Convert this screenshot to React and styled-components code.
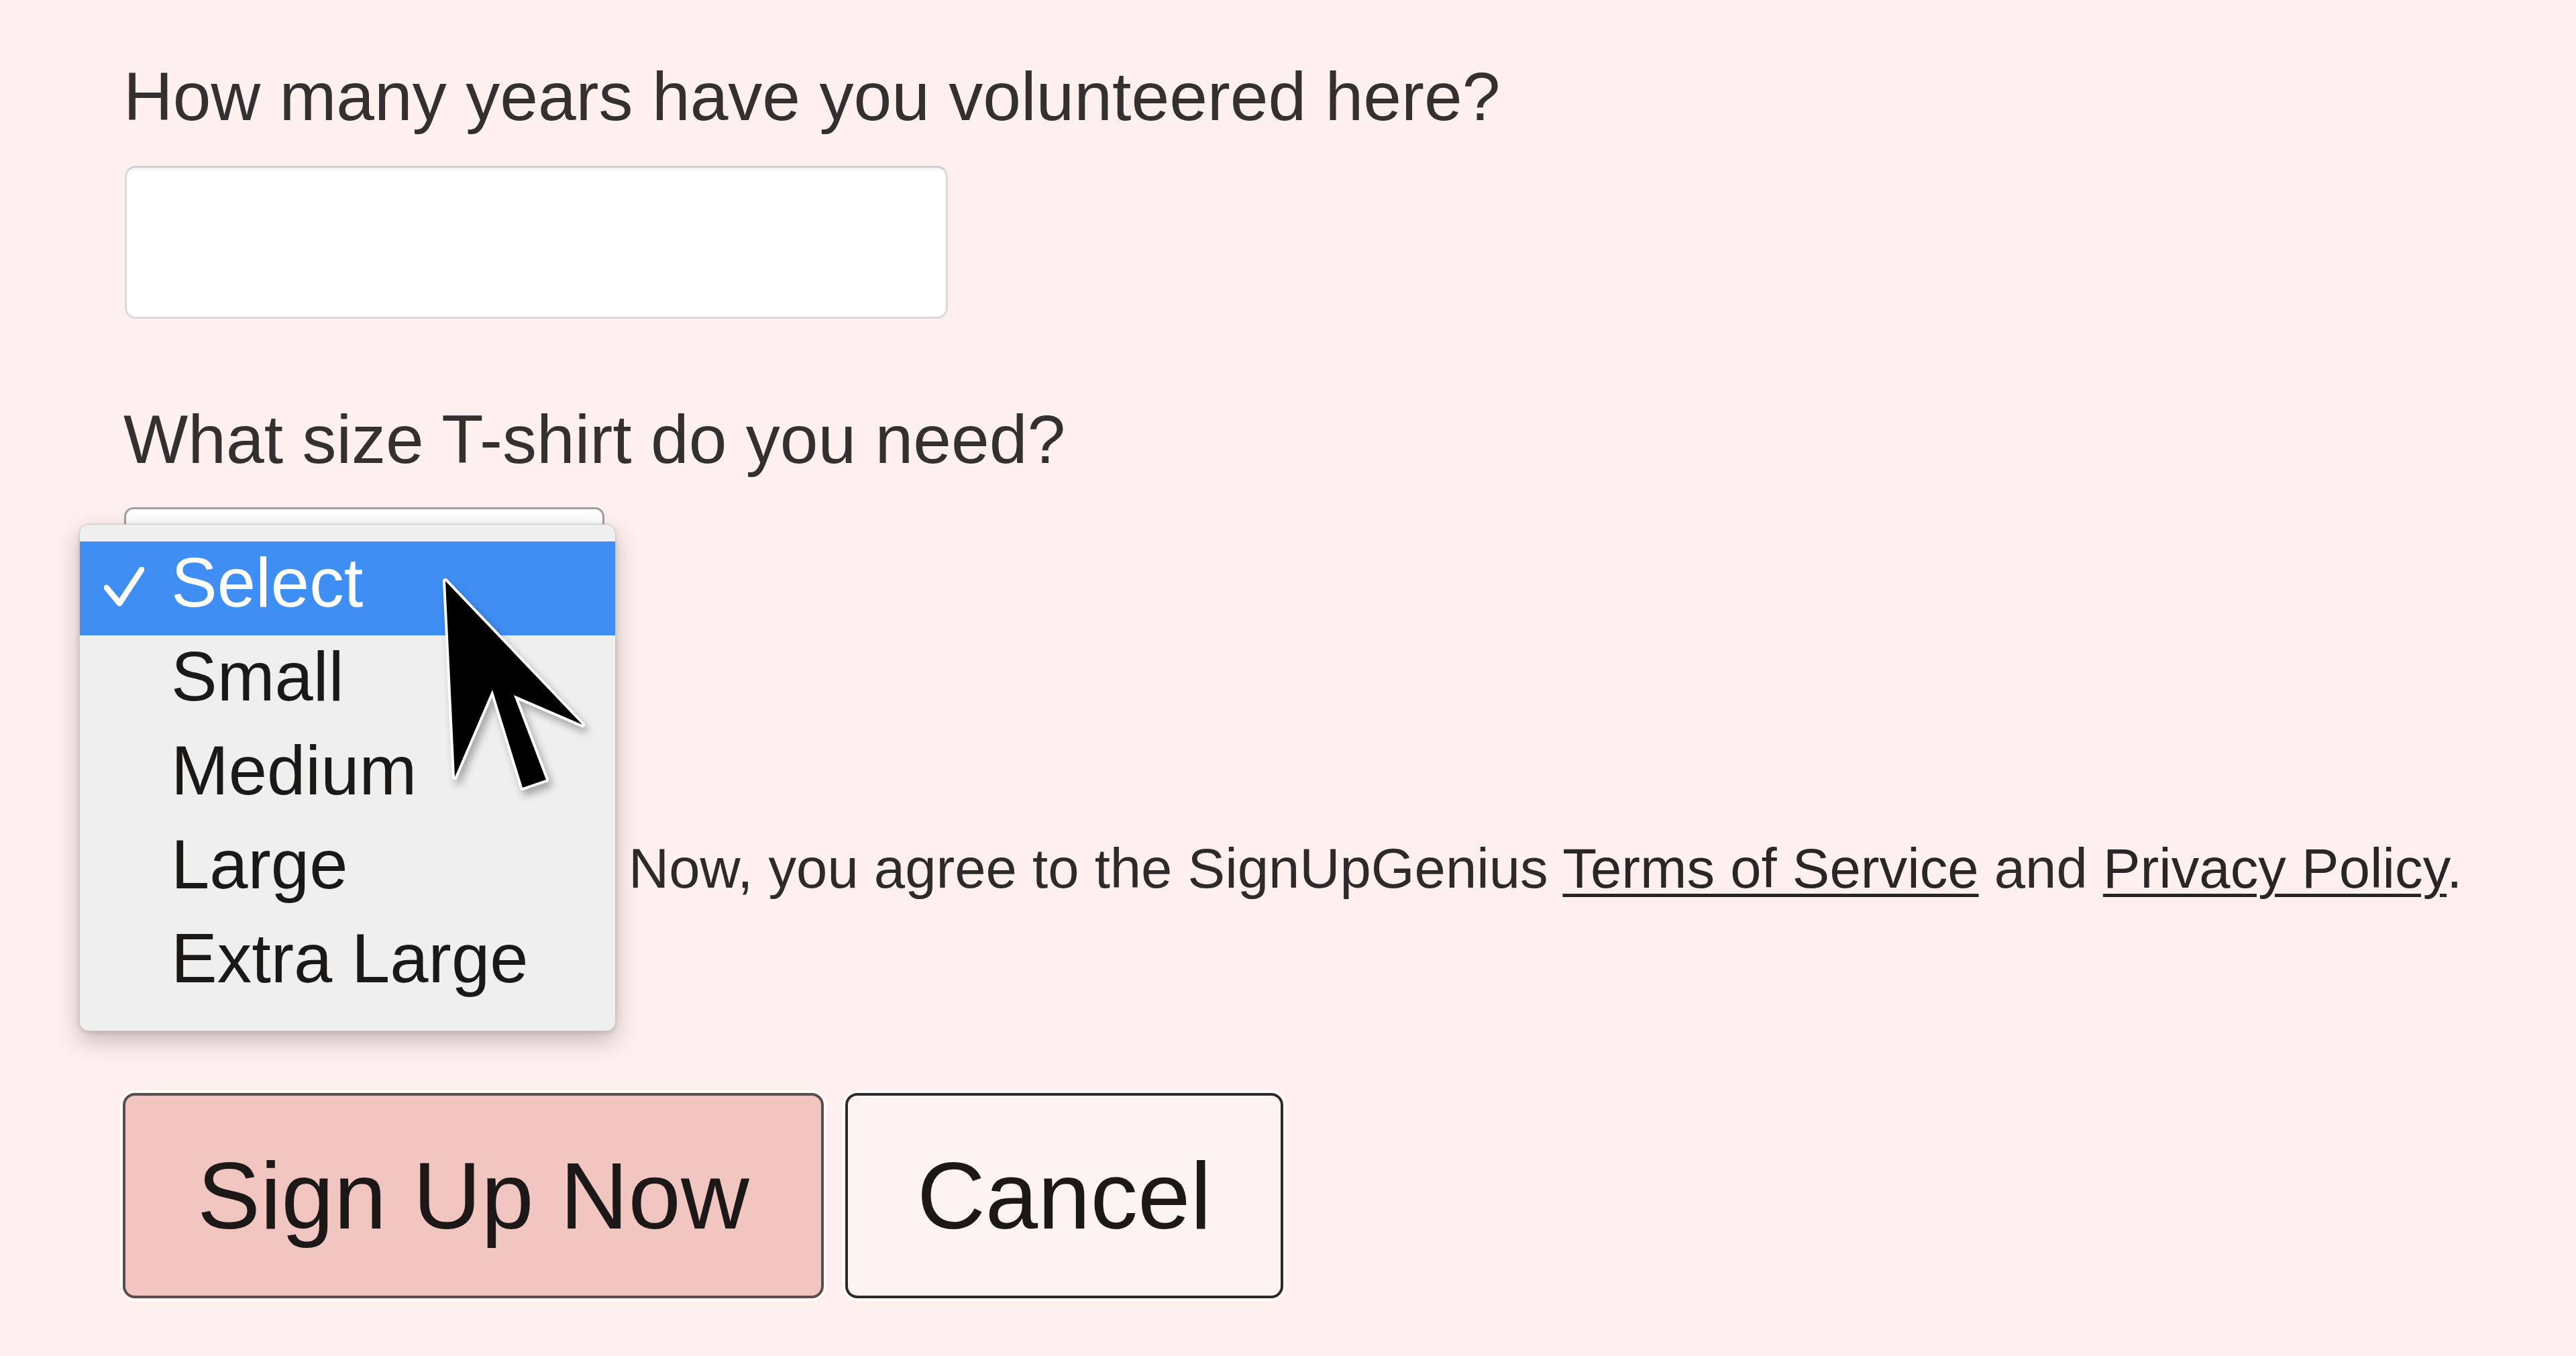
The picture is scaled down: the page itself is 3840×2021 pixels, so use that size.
import React from "react";
import styled, { createGlobalStyle } from "styled-components";

const pageBg = "#fdf0ef";
const ink = "#353030";
const helv = `"Liberation Sans", Arial, sans-serif`;

const sizes = ["Select", "Small", "Medium", "Large", "Extra Large"];

export default function App() {
  return (
    <>
      <GlobalStyle />
      <Form>
        <Label>How many years have you volunteered here?</Label>
        <TextInput type="text" />

        <Label $top={119}>What size T-shirt do you need?</Label>
        <SelectWrap>
          <SelectBox />
          <Menu>
            {sizes.map((s, i) => (
              <Option key={s} $active={i === 0}>
                {i === 0 && (
                  <Check viewBox="0 0 62 62">
                    <polyline points="4,32 24,56 58,4" />
                  </Check>
                )}
                {s}
              </Option>
            ))}
            <Cursor viewBox="-20 -20 240 350">
              <path d="M0,0 L14,292 L70,162 L115,308 L150,296 L102,170 L204,214 Z" />
            </Cursor>
          </Menu>
        </SelectWrap>

        <Terms>
          By clicking Sign Up Now, you agree to the SignUpGenius{" "}
          <Link href="#">Terms of Service</Link> and{" "}
          <Link href="#">Privacy Policy</Link>.
        </Terms>

        <ButtonRow>
          <Button $primary>Sign Up Now</Button>
          <Button>Cancel</Button>
        </ButtonRow>
      </Form>
    </>
  );
}

const GlobalStyle = createGlobalStyle`
  html, body {
    margin: 0;
    padding: 0;
    background: ${pageBg};
    min-height: 100vh;
    overflow: hidden;
  }
  body {
    font-family: ${helv};
    color: ${ink};
  }
`;

const Form = styled.form`
  display: flex;
  flex-direction: column;
  align-items: flex-start;
  padding: 83px 0 0 184px;
`;

const Label = styled.label`
  display: block;
  margin-top: ${(p) => p.$top || 0}px;
  font-size: 102px;
  line-height: 122px;
  color: ${ink};
`;

const TextInput = styled.input`
  box-sizing: border-box;
  margin-top: 42px;
  margin-left: 2px;
  width: 1227px;
  height: 228px;
  background: #fff;
  border: 3px solid #dadada;
  border-top-color: #cfcfcf;
  border-radius: 16px;
  box-shadow: inset 0 3px 4px rgba(0, 0, 0, 0.05);
  outline: none;
`;

const SelectWrap = styled.div`
  position: relative;
  margin-top: 40px;
  margin-left: 1px;
  width: 716px;
  height: 90px;
`;

const SelectBox = styled.div`
  box-sizing: border-box;
  width: 100%;
  height: 100%;
  background: linear-gradient(#fff, #f1f1f1);
  border: 3px solid #a39d9d;
  border-radius: 14px;
`;

const Menu = styled.div`
  position: absolute;
  left: -67px;
  top: 25px;
  z-index: 5;
  box-sizing: border-box;
  width: 800px;
  padding: 25px 0 29px;
  background: #efefef;
  border: 1px solid #cfcaca;
  border-radius: 14px;
  box-shadow: 0 14px 34px rgba(60, 40, 40, 0.28), 0 2px 6px rgba(0, 0, 0, 0.12);
`;

const Option = styled.div`
  position: relative;
  height: 140px;
  box-sizing: border-box;
  padding: 0 0 16px 136px;
  font-size: 103px;
  line-height: 124px;
  color: ${(p) => (p.$active ? "#fff" : "#1b1818")};
  background: ${(p) => (p.$active ? "#3f8ef3" : "transparent")};
  white-space: nowrap;
`;

const Check = styled.svg`
  position: absolute;
  left: 36px;
  top: 38px;
  width: 60px;
  height: 60px;
  fill: none;
  stroke: #fff;
  stroke-width: 9;
  stroke-linecap: round;
  stroke-linejoin: round;
`;

const Cursor = styled.svg`
  position: absolute;
  left: 525px;
  top: 64px;
  width: 240px;
  height: 350px;
  overflow: visible;
  filter: drop-shadow(5px 8px 6px rgba(0, 0, 0, 0.3));

  path {
    fill: #000;
    stroke: #fff;
    stroke-width: 8;
    stroke-linejoin: round;
    paint-order: stroke;
  }
`;

const Terms = styled.p`
  margin: 400px 0 0 17px;
  font-size: 83.3px;
  line-height: 98px;
  color: #2e2a2a;
  white-space: nowrap;
`;

const Link = styled.a`
  color: #2a2626;
  text-decoration: underline;
  text-decoration-thickness: 5px;
  text-underline-offset: 9px;
`;

const ButtonRow = styled.div`
  display: flex;
  gap: 32px;
  margin-top: 285px;
  margin-left: -1px;
`;

const Button = styled.button`
  box-sizing: border-box;
  height: 306px;
  padding: 0 ${(p) => (p.$primary ? 107 : 103)}px;
  font-family: ${helv};
  font-size: 141px;
  color: #1c1818;
  background: ${(p) => (p.$primary ? "#f2c6c0" : "#fdf3f2")};
  border: 4px solid ${(p) => (p.$primary ? "#5d4c4c" : "#2f2a2a")};
  border-radius: 18px;
  box-shadow: 0 0 0 4px rgba(255, 255, 255, 0.85);
  cursor: pointer;
`;
